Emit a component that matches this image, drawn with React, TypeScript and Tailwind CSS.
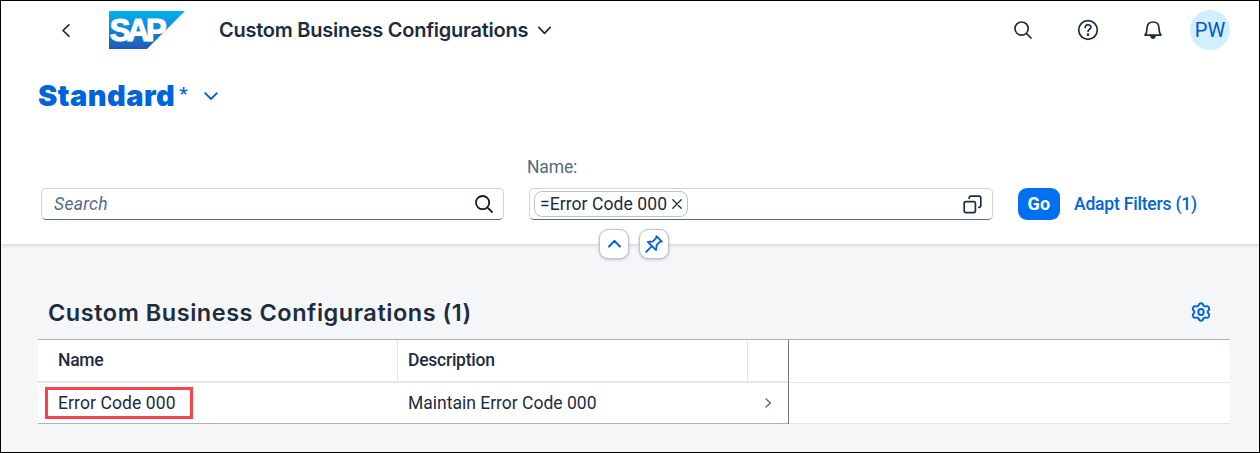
import React from "react";

type GlyphProps = { className?: string; d: string; size?: string; width?: number };

function Stroke({ className = "", d, size = "0 0 20 20", width = 1.6 }: GlyphProps) {
  return (
    <svg viewBox={size} fill="none" stroke="currentColor" strokeWidth={width} strokeLinecap="round" strokeLinejoin="round" className={"shrink-0 " + className}>
      <path d={d} />
    </svg>
  );
}

const SEARCH = "M15.2 8.6a6.6 6.6 0 1 1-13.2 0a6.6 6.6 0 0 1 13.2 0ZM13.4 13.4L18 18";

function Logo() {
  return (
    <svg viewBox="0 0 76 38" className="h-[38px] w-[76px] shrink-0">
      <defs>
        <linearGradient id="logo" x1="0" y1="0" x2="0" y2="1">
          <stop offset="0" stopColor="#00b4f0" />
          <stop offset="0.35" stopColor="#1190dc" />
          <stop offset="1" stopColor="#2059b8" />
        </linearGradient>
      </defs>
      <path d="M0 0H76L38 38H0Z" fill="url(#logo)" />
      <text x="0.8" y="30.4" textLength="57" lengthAdjust="spacing" fontFamily="Liberation Sans" fontWeight="700" fontSize="31" fill="#fff" stroke="#fff" strokeWidth="1.1">SAP</text>
    </svg>
  );
}

function Header() {
  return (
    <header className="flex h-[58px] items-center pl-[59px] pr-[29px] text-[#1d2d3e]">
      <Stroke className="h-[13px] w-[13px]" size="0 0 12 12" d="M8.2 0.8L2.8 6L8.2 11.2" width={1.6} />
      <div className="ml-9"><Logo /></div>
      <h1 className="ml-[34px] whitespace-nowrap text-[20px] font-semibold leading-6 tracking-[-0.25px]">Custom Business Configurations</h1>
      <Stroke className="ml-[10px] h-[13px] w-[13px]" size="0 0 12 12" d="M0.8 3.2L6 8.6L11.2 3.2" width={1.6} />
      <div className="ml-auto flex items-center">
        <Stroke className="h-5 w-5" d={SEARCH} width={1.7} />
        <svg viewBox="0 0 22 22" fill="none" stroke="currentColor" strokeWidth="1.7" strokeLinecap="round" className="ml-11 h-[22px] w-[22px]">
          <circle cx="11" cy="11" r="9.3" />
          <path d="M8.2 8.4c0-3.7 5.7-3.4 5.7-.1 0 2-2.9 2-2.9 4.2" />
          <circle cx="11" cy="15.7" r="0.5" fill="currentColor" />
        </svg>
        <svg viewBox="0 0 20 20" fill="none" stroke="currentColor" strokeWidth="1.7" strokeLinejoin="round" className="ml-11 h-5 w-5">
          <path d="M2 15.2C3.6 13.2 4 11.8 4 8.2C4 4.4 6.3 2 10 2S16 4.4 16 8.2C16 11.8 16.4 13.2 18 15.2Z" />
          <path d="M7 15.6H13C12.8 17.6 11.6 19 10 19S7.2 17.6 7 15.6Z" fill="currentColor" stroke="none" />
        </svg>
        <div className="ml-[27px] flex h-10 w-10 items-center justify-center rounded-full bg-[#d1efff] font-['Roboto',sans-serif] text-[20px] text-[#0057d2]">PW</div>
      </div>
    </header>
  );
}

function Filters() {
  const field = "flex h-8 items-center rounded-[5px] border border-[#d0d5da] border-b-[#556b81] bg-white";
  return (
    <div className="flex items-end pl-10 font-['Roboto',sans-serif] text-[17.5px]">
      <div className={field + " w-[463px] pl-3 pr-[9px]"}>
        <span className="italic leading-5 tracking-[0.3px] text-[#556b82]">Search</span>
        <Stroke className="ml-auto h-5 w-5 text-[#131e29]" d={SEARCH} width={1.8} />
      </div>
      <div className="ml-[25px] w-[464px]">
        <div className="-ml-[2px] mb-[9px] leading-6 tracking-[-0.15px] text-[#556b82]">Name:</div>
        <div className={field + " pl-1 pr-[10px]"}>
          <div className="flex h-[26px] w-[154px] items-center rounded-[8px] border border-[#bcc3ca] pl-[5px] text-[#1d2d3e]">
            <span className="whitespace-nowrap leading-5 tracking-[0.08px]">=Error Code 000</span>
            <Stroke className="ml-[5px] h-[10px] w-[10px]" size="0 0 10 10" d="M0.8 0.8L9.2 9.2M9.2 0.8L0.8 9.2" width={1.3} />
          </div>
          <Stroke className="ml-auto h-[19px] w-[19px] text-[#1d2d3e]" size="0 0 19 19" d="M3 6.6H10.6Q12.4 6.6 12.4 8.4V15.8Q12.4 17.6 10.6 17.6H3Q1.2 17.6 1.2 15.8V8.4Q1.2 6.6 3 6.6ZM6.2 3.2V2.8Q6.2 1.2 7.8 1.2H16Q17.8 1.2 17.8 3V10.6Q17.8 12.4 16 12.4H15.8" width={1.7} />
        </div>
      </div>
      <button className="ml-[25px] h-8 w-[42px] rounded-[9px] bg-[#0070f2] pb-[2px] text-[18px] font-bold tracking-[0.3px] text-white">Go</button>
      <button className="ml-[14px] h-8 whitespace-nowrap font-medium tracking-[-0.2px] text-[#0064d9]">Adapt Filters (1)</button>
    </div>
  );
}

function HeaderToggles() {
  const box = "flex h-[30px] w-[30px] items-center justify-center rounded-[9px] border border-[#bcc3ca] bg-white text-[#0064d9] shadow-[0_1px_3px_rgba(85,107,130,0.35)]";
  return (
    <div className="absolute inset-x-0 -bottom-[15px] flex gap-[10px] pl-[598px]">
      <button className={box}>
        <Stroke className="-mt-[2px] h-[13px] w-[13px]" size="0 0 12 12" d="M1 8.8L6 3.6L11 8.8" width={1.9} />
      </button>
      <button className={box}>
        <Stroke className="-mt-px h-[18px] w-[18px]" size="0 0 18 18" d="M1.2 16.8L6.2 11.8M11.4 1.2L16.8 6.6L14.8 6.9L11.7 10L11 15.1L2.9 7L8 6.3L11.1 3.2Z" width={1.8} />
      </button>
    </div>
  );
}

function Table() {
  return (
    <div className="ml-[37px] flex w-[1192px] border-t border-[#a9b4be] font-['Roboto',sans-serif] text-[17.5px] text-[#1d2d3e]">
      <div className="w-[751px] border-r border-r-[#75787b] bg-white">
        <div className="flex h-[43px] border-b-2 border-[#e5e5e5] font-medium tracking-[-0.25px]">
          <div className="flex w-[360px] items-center border-r border-[#e5e5e5] pl-5">Name</div>
          <div className="flex w-[350px] items-center border-r border-[#e5e5e5] pl-[10px]">Description</div>
        </div>
        <div className="flex h-[41px] items-center border-b border-[#a9b4be]">
          <div className="flex w-[360px] pl-[7px]">
            <div className="flex h-8 w-[148px] items-center whitespace-nowrap border-3 border-[#fa4248] pl-[10px] tracking-[0.1px]">Error Code 000</div>
          </div>
          <div className="w-[350px] pl-[10px]">Maintain Error Code 000</div>
          <Stroke className="ml-[15px] h-[10px] w-[10px] text-[#556b82]" size="0 0 10 10" d="M3 1L7.4 5L3 9" width={1.4} />
        </div>
      </div>
      <div className="grow bg-white">
        <div className="h-[43px] border-b border-[#e5e5e5]" />
        <div className="h-[41px] border-b border-[#e5e5e5]" />
      </div>
    </div>
  );
}

export default function App() {
  return (
    <div className="h-[453px] w-[1260px] overflow-hidden border border-black bg-[#f5f6f7] font-['Inter',sans-serif] text-[#1d2d3e]">
      <div className="relative h-[243px] bg-white shadow-[0_1px_0_#d9dbdd,0_2px_4px_rgba(85,107,130,0.16)]">
        <Header />
        <div className="flex h-[74px] items-center pl-[37px] text-[#0064d9]">
          <h2 className="text-[29px] font-black leading-9 tracking-[0.45px]">Standard</h2>
          <span className="-mt-1 ml-1 font-['Roboto',sans-serif] text-[19px] font-medium leading-5">*</span>
          <Stroke className="ml-[16px] h-[14px] w-[14px]" size="0 0 14 14" d="M1.2 4.2L7 10L12.8 4.2" width={1.9} />
        </div>
        <div className="pt-[22px]"><Filters /></div>
        <HeaderToggles />
      </div>
      <div className="flex h-[95px] items-center pl-[47px] pr-[48px] pt-[42px]">
        <h2 className="text-[23.5px] font-semibold leading-7 tracking-[0.53px]">Custom Business Configurations (1)</h2>
        <svg viewBox="0 0 20 20" fill="none" stroke="#0064d9" strokeWidth="1.9" strokeLinejoin="round" className="-mt-[2px] ml-auto h-5 w-5">
          <path d="M8.3 2Q10 .4 11.7 2Q12.4 4.4 14.4 4.5Q17 3.4 17.9 5.7Q18.8 7.4 17.4 8.4Q16 10 17.4 11.6Q18.8 12.6 17.9 14.3Q17 16.6 14.4 15.5Q12.4 15.6 11.7 18Q10 19.6 8.3 18Q7.6 15.6 5.6 15.5Q3 16.6 2.1 14.3Q1.2 12.6 2.6 11.6Q4 10 2.6 8.4Q1.2 7.4 2.1 5.7Q3 3.4 5.6 4.5Q7.6 4.4 8.3 2Z" />
          <ellipse cx="10" cy="10" rx="2.7" ry="3" />
        </svg>
      </div>
      <Table />
    </div>
  );
}
